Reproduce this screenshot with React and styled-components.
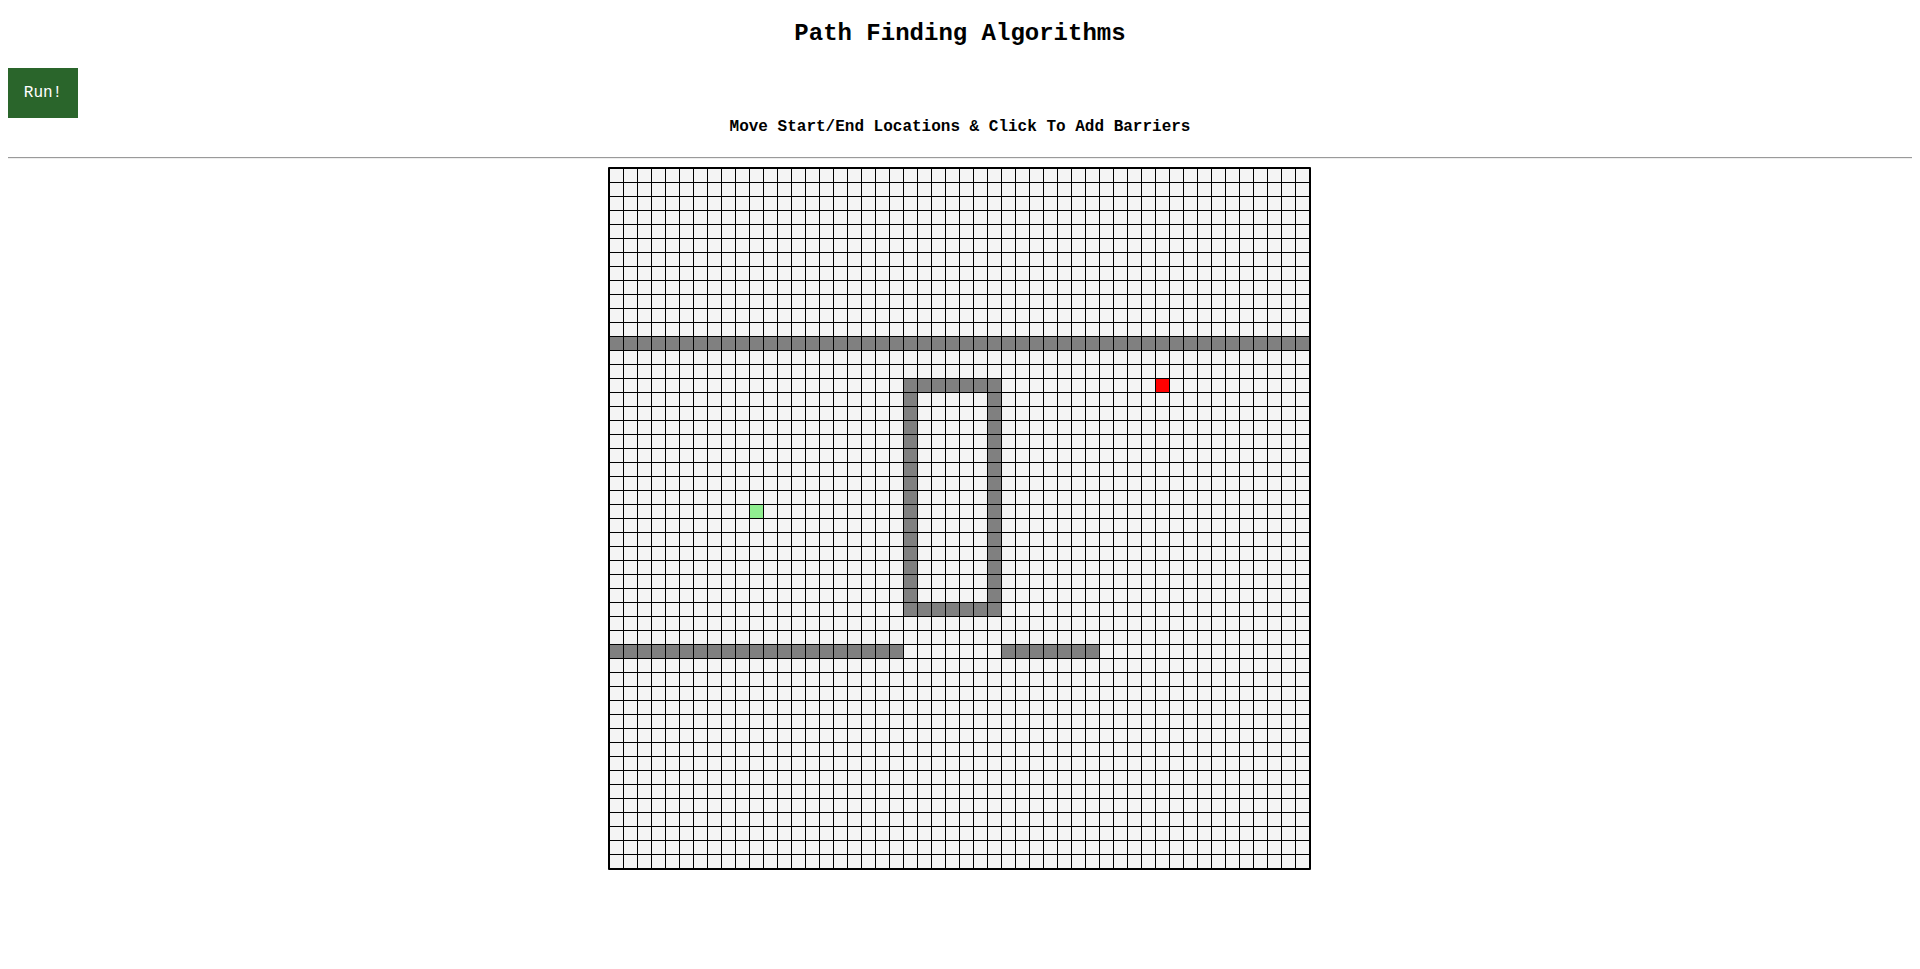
import React from "react";
import styled, { createGlobalStyle } from "styled-components";

const GlobalStyle = createGlobalStyle`
  html, body { margin: 0; padding: 0; background: #ffffff; }
  body { font-family: "Liberation Mono", "Courier New", monospace; color: #000; }
`;

const Page = styled.div`
  padding: 0 8px 8px;
`;

const Title = styled.h1`
  margin: 20px 0 0;
  font-family: "Liberation Mono", "Courier New", monospace;
  font-weight: bold;
  font-size: 24px;
  line-height: 28px;
  text-align: center;
`;

const Toolbar = styled.div`
  display: flex;
  margin-top: 20px;
`;

const RunButton = styled.button`
  width: 70px;
  height: 50px;
  padding: 0;
  border: none;
  background: #2a652b;
  color: #ffffff;
  font-family: "Liberation Mono", "Courier New", monospace;
  font-size: 16px;
  cursor: pointer;
`;

const Subtitle = styled.h4`
  margin: 0;
  font-family: "Liberation Mono", "Courier New", monospace;
  font-weight: bold;
  font-size: 16px;
  line-height: 19px;
  text-align: center;
`;

const Divider = styled.hr`
  margin: 20px 0 8px;
  height: 0;
  border: none;
  border-top: 1px solid #9a9a9a;
  border-bottom: 1px solid #eeeeee;
`;

const BoardWrap = styled.div`
  display: flex;
  justify-content: center;
  padding-right: 1px;
`;

const Board = styled.div`
  display: grid;
  grid-template-columns: repeat(${(p) => p.$cols}, 13px);
  grid-auto-rows: 13px;
  gap: 1px;
  background: #000;
  border: 2px solid #000;
  border-radius: 1px;
`;

const CELL_COLORS = {
  empty: "#f4f4f4",
  wall: "#808080",
  start: "#90ee90",
  end: "#ff0000",
};

const Cell = styled.div`
  background: ${(p) => CELL_COLORS[p.$kind]};
`;

const N = 50;

function cellKind(r, c) {
  if (r === 24 && c === 10) return "start";
  if (r === 15 && c === 39) return "end";
  if (r === 12) return "wall";
  if (r === 34 && (c <= 20 || (c >= 28 && c <= 34))) return "wall";
  if ((r === 15 || r === 31) && c >= 21 && c <= 27) return "wall";
  if ((c === 21 || c === 27) && r >= 15 && r <= 31) return "wall";
  return "empty";
}

export default function App() {
  const cells = [];
  for (let r = 0; r < N; r++) {
    for (let c = 0; c < N; c++) {
      cells.push(<Cell key={`${r}-${c}`} $kind={cellKind(r, c)} />);
    }
  }
  return (
    <>
      <GlobalStyle />
      <Page>
        <Title>Path Finding Algorithms</Title>
        <Toolbar>
          <RunButton>Run!</RunButton>
        </Toolbar>
        <Subtitle>Move Start/End Locations &amp; Click To Add Barriers</Subtitle>
        <Divider />
        <BoardWrap>
          <Board $cols={N}>{cells}</Board>
        </BoardWrap>
      </Page>
    </>
  );
}
